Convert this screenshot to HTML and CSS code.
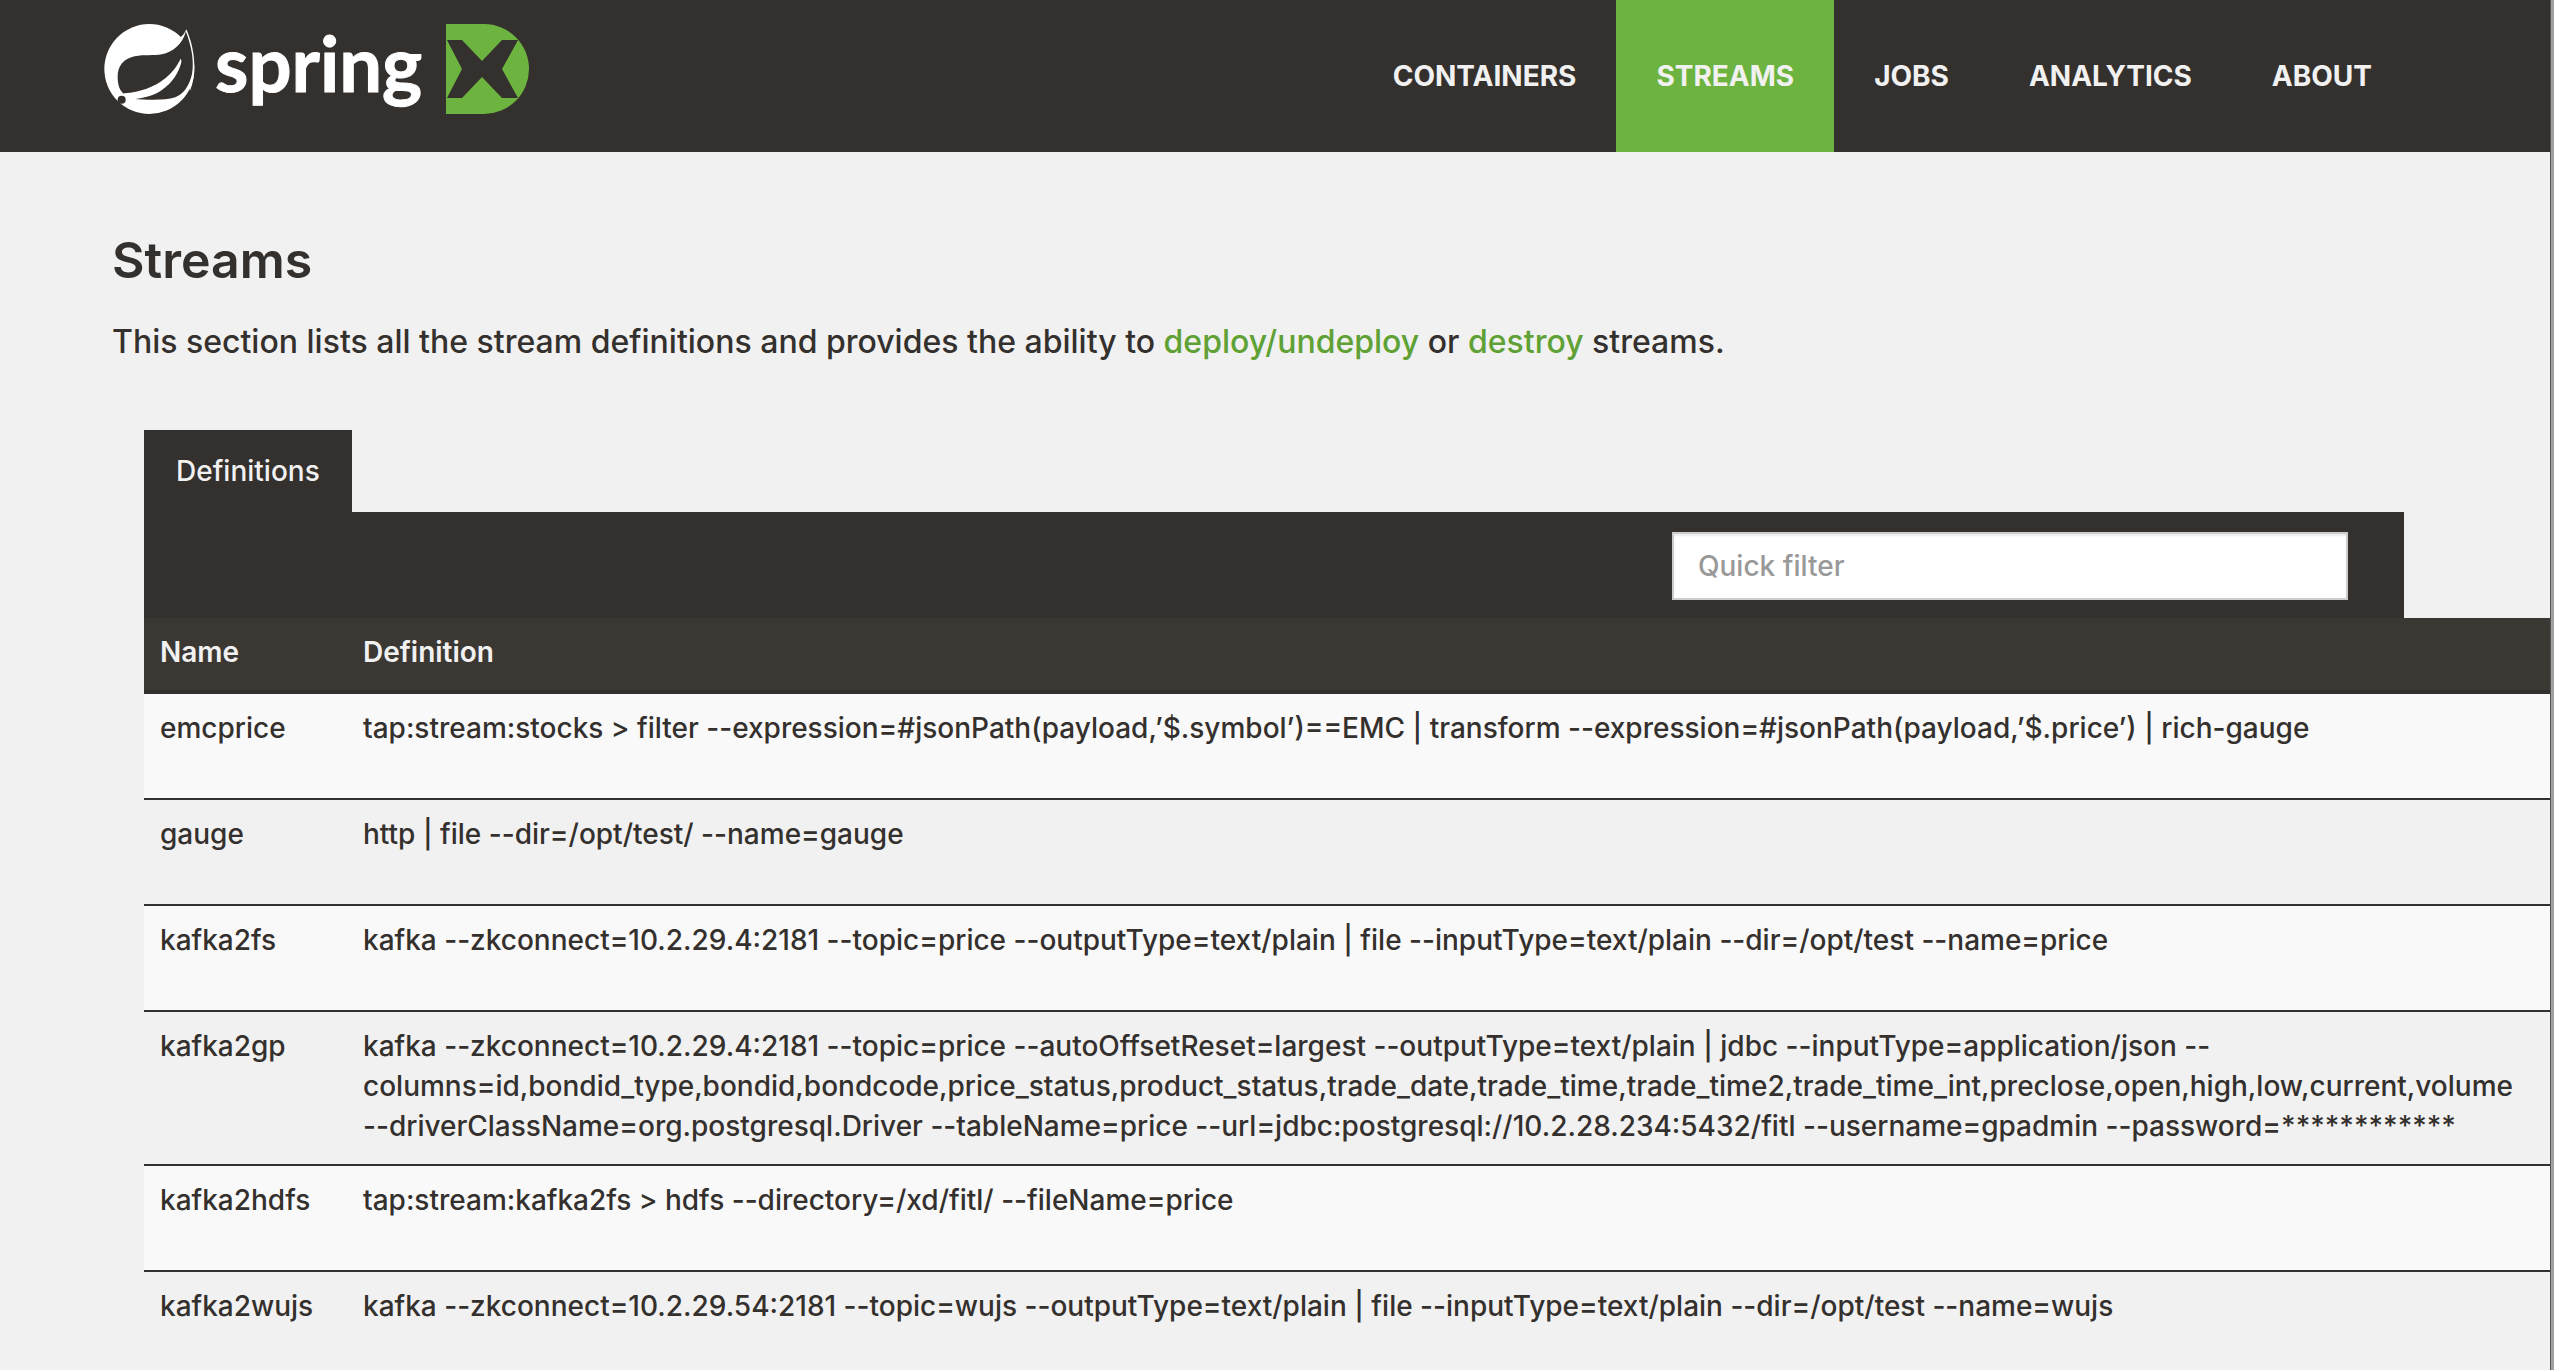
FILE: index.html
```html
<!DOCTYPE html>
<html lang="en">
<head>
<meta charset="utf-8">
<meta name="viewport" content="width=device-width, initial-scale=1">
<title>Spring XD - Streams</title>
<link rel="stylesheet" href="styles.css">
</head>
<body>
<div class="page">
  <header class="navbar">
    <a class="brand" href="#" aria-label="Spring XD">
      <svg class="brand-leaf" viewBox="0 0 273 273" aria-hidden="true">
        <circle cx="136" cy="135" r="135" fill="#fff"/>
        <path fill="#fff" d="M225 45C236 36 243 26 247 16C257 40 262 55 265 72C273 110 275 160 258 200Z"/>
        <path fill="#34302d" d="M245 24C236 60 206 84 174 91C148 96 122 91 92 97C58 104 40 128 41 160C41 183 47 200 60 210L86 224C130 228 180 230 214 220C238 210 256 186 264 150C271 110 262 66 247 26Z"/>
        <path fill="#fff" d="M60 208C110 204 150 190 185 162C209 142 221 122 230 104C234 108 232 116 229 125C218 158 196 184 166 203C140 218 110 224 62 229Z"/>
        <circle cx="53" cy="227" r="12" fill="#34302d"/>
      </svg>
      <span class="brand-name">spring</span>
      <svg class="brand-mark" viewBox="0 0 83 90" aria-hidden="true">
        <path fill="#6db33f" d="M0 0H38A45 45 0 0 1 38 90H0Z"/>
        <path fill="#34302d" d="M1 16H16L36 37L56 16H72L56 45L72 74H56L36 53L16 74H1L16 45Z"/>
      </svg>
    </a>
    <nav class="nav">
      <a href="#">CONTAINERS</a>
      <a class="active" href="#" aria-current="page">STREAMS</a>
      <a href="#">JOBS</a>
      <a href="#">ANALYTICS</a>
      <a href="#">ABOUT</a>
    </nav>
  </header>

  <main class="content">
    <h1>Streams</h1>
    <p class="intro">This section lists all the stream definitions and provides the ability to <a href="#">deploy/undeploy</a> or <a href="#">destroy</a> streams.</p>

    <section class="panel">
      <button class="tab" type="button">Definitions</button>
      <div class="toolbar">
        <input class="filter" type="text" placeholder="Quick filter" aria-label="Quick filter">
      </div>
      <table class="streams">
        <thead>
          <tr><th class="col-name" scope="col">Name</th><th scope="col">Definition</th></tr>
        </thead>
        <tbody>
          <tr><td>emcprice</td><td>tap:stream:stocks &gt; filter --expression=#jsonPath(payload,’$.symbol’)==EMC | transform --expression=#jsonPath(payload,’$.price’) | rich-gauge</td></tr>
          <tr><td>gauge</td><td>http | file --dir=/opt/test/ --name=gauge</td></tr>
          <tr><td>kafka2fs</td><td>kafka --zkconnect=10.2.29.4:2181 --topic=price --outputType=text/plain | file --inputType=text/plain --dir=/opt/test --name=price</td></tr>
          <tr><td>kafka2gp</td><td>kafka --zkconnect=10.2.29.4:2181 --topic=price --autoOffsetReset=largest --outputType=text/plain | jdbc --inputType=application/json --<br>columns=id,bondid_type,bondid,bondcode,price_status,product_status,trade_date,trade_time,trade_time2,trade_time_int,preclose,open,high,low,current,volume<br>--driverClassName=org.postgresql.Driver --tableName=price --url=jdbc:postgresql://10.2.28.234:5432/fitl --username=gpadmin --password=************</td></tr>
          <tr><td>kafka2hdfs</td><td>tap:stream:kafka2fs &gt; hdfs --directory=/xd/fitl/ --fileName=price</td></tr>
          <tr><td>kafka2wujs</td><td>kafka --zkconnect=10.2.29.54:2181 --topic=wujs --outputType=text/plain | file --inputType=text/plain --dir=/opt/test --name=wujs</td></tr>
        </tbody>
      </table>
    </section>
  </main>
</div>
</body>
</html>
```
FILE: styles.css
```css
* {
  box-sizing: border-box;
}

body {
  margin: 0;
  border-right: 3px solid #a0a0a0;
  background: #f1f1f1;
  color: #34302d;
  font: 500 28px/40px Inter, "Open Sans", sans-serif;
}

.page {
  min-height: 100vh;
  border-right: 1px solid #555;
  overflow: hidden;
}

/* Header */
.navbar {
  display: flex;
  justify-content: space-between;
  height: 152px;
  padding: 0 138px 0 104px;
  background: #34302d;
}

.brand {
  display: flex;
  align-items: flex-start;
  padding-top: 24px;
  color: #fff;
  text-decoration: none;
}

.brand-leaf {
  width: 91px;
  height: 91px;
}

.brand-name {
  width: 231px;
  margin-left: 20px;
  font: 700 76px/78px Lato, sans-serif;
  -webkit-text-stroke: 1px #fff;
}

.brand-mark {
  width: 83px;
  height: 90px;
}

.nav {
  display: flex;
}

.nav a {
  padding: 0 40px;
  color: #f1f1f1;
  font-weight: 700;
  line-height: 152px;
  text-decoration: none;
}

.nav .active {
  background: #6db33f;
}

/* Page body */
.content {
  padding: 78px 146px 0 112px;
}

h1 {
  margin: 0 0 30px;
  font-size: 50px;
  font-weight: 600;
  line-height: 60px;
}

.intro {
  margin: 0;
  font-size: 32px;
  line-height: 44px;
}

.intro a {
  color: #5fa134;
  text-decoration: none;
}

.panel {
  margin: 66px 0 0 32px;
}

.tab {
  display: block;
  height: 82px;
  padding: 0 32px;
  border: 0;
  background: #34302d;
  color: #f1f1f1;
  font: inherit;
}

.toolbar {
  display: flex;
  justify-content: flex-end;
  padding: 20px 56px 18px;
  background: #34302d;
}

.filter {
  width: 676px;
  height: 68px;
  padding: 0 24px;
  border: 2px solid #ccc;
  background: #fff;
  box-shadow: inset 0 2px 2px rgba(0, 0, 0, 0.08);
  color: #34302d;
  font: inherit;
}

.filter::placeholder {
  color: #999;
  opacity: 1;
}

/* The definitions run wider than the panel, past the window edge */
.streams {
  width: 120%;
  border-collapse: separate;
  border-spacing: 0;
  white-space: nowrap;
}

th,
td {
  padding: 14px 16px 18px;
  text-align: left;
  vertical-align: top;
}

th {
  border-bottom: 4px solid #34302d;
  background: #3b3834;
  color: #f1f1f1;
  font-weight: 600;
}

.col-name {
  width: 203px;
}

td {
  height: 106px;
  border-bottom: 2px solid #34302d;
}

tbody tr:nth-child(odd) {
  background: #f9f9f9;
}
```
